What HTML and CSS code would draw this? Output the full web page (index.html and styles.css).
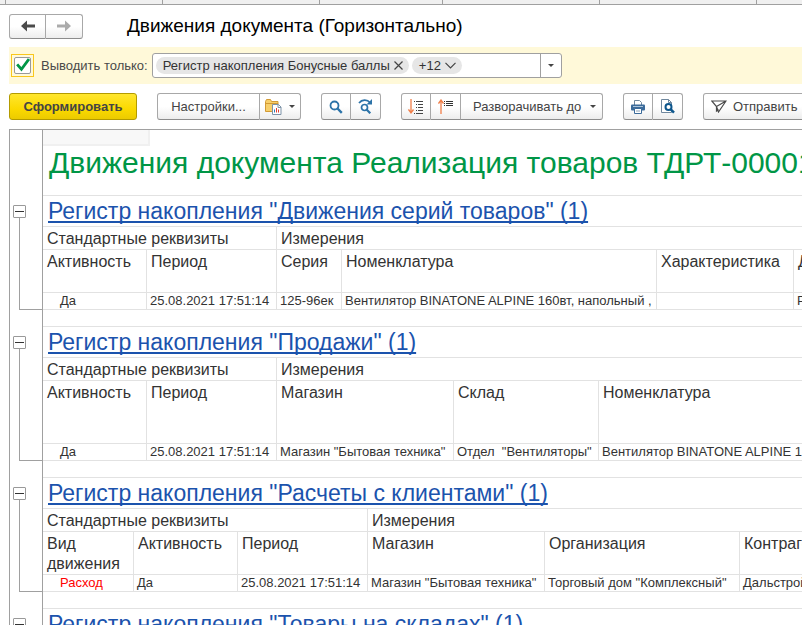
FILE: index.html
```html
<!DOCTYPE html>
<html lang="ru">
<head>
  <meta charset="UTF-8" />
  <meta name="viewport" content="width=device-width, initial-scale=1.0"/>
  <title>Движения документа (Горизонтально)</title>
  <link rel="stylesheet" href="styles.css">
</head>
<body>

<div class="tab-strip">
  <span class="tab tab-edge"></span>
  <span class="tab tab-wide"></span>
  <span class="tab tab-wide"></span>
  <span class="tab tab-narrow"></span>
  <span class="tab tab-wide"></span>
  <span class="tab tab-wide"></span>
</div>

<header class="page-header">
  <div class="btn-group">
    <button class="btn nav-btn" aria-label="Назад">
      <svg width="14" height="12" viewBox="0 0 14 12"><path d="M0 6l6-5.500V4.500h8v3H6v4z" fill="#4a4a4a"/></svg>
    </button>
    <button class="btn nav-btn" aria-label="Вперед">
      <svg width="14" height="12" viewBox="0 0 14 12"><path d="M14 6L8 .5V4.500H0v3h8v4z" fill="#ababab"/></svg>
    </button>
  </div>
  <h1>Движения документа (Горизонтально)</h1>
</header>

<div class="filter-bar">
  <span class="check-frame"><input type="checkbox" id="onlySelected" checked></span>
  <label for="onlySelected">Выводить только:</label>
  <div class="combo">
    <span class="chip">Регистр накопления Бонусные баллы
      <button class="chip-btn" aria-label="Удалить"><svg width="9" height="9" viewBox="0 0 9 9"><path d="M.5.5l8 8M8.5.5l-8 8" stroke="#444" stroke-width="1.2"/></svg></button>
    </span>
    <span class="chip">+12
      <button class="chip-btn" aria-label="Показать все"><svg width="11" height="7" viewBox="0 0 11 7"><path d="M.5.8l5 5 5-5" fill="none" stroke="#444" stroke-width="1.2"/></svg></button>
    </span>
    <input type="text" class="combo-input" aria-label="Регистры">
    <button class="combo-drop" aria-label="Выбрать"><span class="caret"></span></button>
  </div>
</div>

<div class="toolbar">
  <button class="btn btn-primary">Сформировать</button>
  <div class="btn-group">
    <button class="btn btn-settings">Настройки...</button>
    <button class="btn btn-variants" aria-label="Варианты отчета">
      <svg width="17" height="16" viewBox="0 0 17 16">
        <path d="M.5 12.500V2.500l1-2h4l1 2h6.500v10z" fill="#f7cf6b" stroke="#d29a35"/>
        <path d="M1 4.500h12" stroke="#d29a35"/>
        <path d="M7.500 5.500h6l2.500 2.500v7.500H7.500z" fill="#fff" stroke="#7d93a8"/>
        <path d="M13 5.500v3h3" fill="none" stroke="#7d93a8"/>
        <path d="M9.500 13.500v-3" stroke="#2d79b5"/><path d="M11.500 13.500V9M13.500 13.500v-3" stroke="#df3e32"/>
      </svg>
      <span class="caret"></span>
    </button>
  </div>
  <div class="btn-group">
    <button class="btn btn-icon" aria-label="Найти">
      <svg width="14" height="14" viewBox="0 0 14 14"><circle cx="5.5" cy="5.5" r="4" fill="#fff" stroke="#2c73a8" stroke-width="1.8"/><path d="M8.500 8.500l4.300 4.300" stroke="#2c73a8" stroke-width="2.4"/></svg>
    </button>
    <button class="btn btn-icon" aria-label="Найти далее">
      <svg width="16" height="15" viewBox="0 0 16 15"><path d="M1 4C4 .5 9 .2 12 3.500" fill="none" stroke="#2c73a8" stroke-width="1.8"/><path d="M14 0v5.500H8.500z" fill="#2c73a8"/><circle cx="6.5" cy="8.5" r="3" fill="#fff" stroke="#2c73a8" stroke-width="1.7"/><path d="M8.800 10.800l3.500 3.500" stroke="#2c73a8" stroke-width="2.2"/></svg>
    </button>
  </div>
  <div class="btn-group">
    <button class="btn btn-icon" aria-label="Развернуть все">
      <svg width="16" height="16" viewBox="0 0 16 16"><path d="M3 0v14M.5 10.500L3 14l2.500-3.500" fill="none" stroke="#f07f4a" stroke-width="1.3"/><path d="M6 2.500h1M8 2.500h7M8 5.500h1M10 5.500h5M8 8.500h1M10 8.500h5M8 11.500h1M10 11.500h5M6 14.500h1M8 14.500h7" stroke="#444"/></svg>
    </button>
    <button class="btn btn-icon" aria-label="Свернуть все">
      <svg width="16" height="16" viewBox="0 0 16 16"><path d="M3 15V1M.5 4.500L3 1l2.500 3.500" fill="none" stroke="#f07f4a" stroke-width="1.3"/><path d="M6 2.500h1M8 2.500h7M6 4.500h1M8 4.500h7M6 6.500h1M8 6.500h7" stroke="#333"/></svg>
    </button>
    <button class="btn btn-expand">Разворачивать до <span class="caret"></span></button>
  </div>
  <div class="btn-group">
    <button class="btn btn-icon" aria-label="Печать">
      <svg width="14" height="14" viewBox="0 0 14 14"><path d="M3.500 5V.5h5l2 2V5" fill="#fff" stroke="#6f879d"/><rect y="4.5" width="14" height="6" rx="1" fill="#3a6a9a"/><path d="M2 6.500h10" stroke="#a9c2d8"/><path d="M3.500 8.500h7v5h-7z" fill="#fff" stroke="#3a6a9a"/><path d="M5 11h4" stroke="#8ba3b8"/></svg>
    </button>
    <button class="btn btn-icon" aria-label="Предварительный просмотр">
      <svg width="14" height="15" viewBox="0 0 14 15"><path d="M.5.5h7l3 3v10H.5z" fill="#fff" stroke="#6f879d"/><path d="M7.500.5v3h3" fill="none" stroke="#6f879d"/><circle cx="7.5" cy="8" r="3" fill="#fff" stroke="#0d568c" stroke-width="2"/><path d="M9.500 10.200l3.500 3.500" stroke="#0d568c" stroke-width="2.5"/></svg>
    </button>
  </div>
  <button class="btn btn-send">
    <svg width="16" height="13" viewBox="0 0 16 13"><path d="M.8 1H15L7.500 12l-2-5.500zM5.500 6.500L15 1M5.500 6.500V11l2-1.500" fill="none" stroke="#4a4a4a" stroke-width="1.2"/></svg>
    Отправить <span class="caret"></span>
  </button>
</div>

<main class="report">
  <div class="row-group title-group">
    <div class="gutter"></div>
    <div class="sheet title-row">
      <div class="active-cell"></div>
      <h2>Движения документа Реализация товаров ТДРТ-00001</h2>
    </div>
  </div>

  <section class="row-group">
    <div class="gutter">
      <button class="toggle" aria-label="Свернуть"></button>
      <div class="branch"></div>
    </div>
    <div class="sheet">
      <h3><a href="#">Регистр накопления "Движения серий товаров" (1)</a></h3>
      <table>
        <colgroup><col class="w-104"><col class="w-130"><col class="w-65"><col class="w-315"><col class="w-137"><col></colgroup>
        <tr class="groups"><th colspan="2">Стандартные реквизиты</th><th colspan="4">Измерения</th></tr>
        <tr class="fields"><th>Активность</th><th>Период</th><th>Серия</th><th>Номенклатура</th><th>Характеристика</th><th>Документ</th></tr>
        <tr class="values"><td class="first">Да</td><td>25.08.2021 17:51:14</td><td>125-96ек</td><td>Вентилятор BINATONE ALPINE 160вт, напольный ,</td><td></td><td>Реализация</td></tr>
      </table>
    </div>
  </section>

  <section class="row-group">
    <div class="gutter">
      <button class="toggle" aria-label="Свернуть"></button>
      <div class="branch"></div>
    </div>
    <div class="sheet">
      <h3><a href="#">Регистр накопления "Продажи" (1)</a></h3>
      <table>
        <colgroup><col class="w-104"><col class="w-130"><col class="w-177"><col class="w-145"><col></colgroup>
        <tr class="groups"><th colspan="2">Стандартные реквизиты</th><th colspan="3">Измерения</th></tr>
        <tr class="fields fields-tall"><th>Активность</th><th>Период</th><th>Магазин</th><th>Склад</th><th>Номенклатура</th></tr>
        <tr class="values"><td class="first">Да</td><td>25.08.2021 17:51:14</td><td>Магазин "Бытовая техника"</td><td>Отдел  "Вентиляторы"</td><td>Вентилятор BINATONE ALPINE 160вт, напольный ,</td></tr>
      </table>
    </div>
  </section>

  <section class="row-group">
    <div class="gutter">
      <button class="toggle" aria-label="Свернуть"></button>
      <div class="branch"></div>
    </div>
    <div class="sheet">
      <h3><a href="#">Регистр накопления "Расчеты с клиентами" (1)</a></h3>
      <table>
        <colgroup><col class="w-91"><col class="w-104"><col class="w-130"><col class="w-177"><col class="w-195"><col></colgroup>
        <tr class="groups"><th colspan="3">Стандартные реквизиты</th><th colspan="3">Измерения</th></tr>
        <tr class="fields"><th>Вид движения</th><th>Активность</th><th>Период</th><th>Магазин</th><th>Организация</th><th>Контрагент</th></tr>
        <tr class="values"><td class="first expense">Расход</td><td>Да</td><td>25.08.2021 17:51:14</td><td>Магазин "Бытовая техника"</td><td>Торговый дом "Комплексный"</td><td>Дальстрой</td></tr>
      </table>
    </div>
  </section>

  <section class="row-group">
    <div class="gutter">
      <button class="toggle" aria-label="Свернуть"></button>
      <div class="branch"></div>
    </div>
    <div class="sheet">
      <h3><a href="#">Регистр накопления "Товары на складах" (1)</a></h3>
    </div>
  </section>
</main>

</body>
</html>
```
FILE: styles.css
```css
* {
  box-sizing: border-box;
}
body {
  margin: 0;
  height: 100vh;
  display: flex;
  flex-direction: column;
  overflow: hidden;
  font-family: "Liberation Sans", Arial, sans-serif;
  font-size: 13px;
  color: #333;
  background: #fff;
}
button, input {
  font: inherit;
  color: inherit;
}
svg {
  flex: none;
  display: block;
}

/* tabs of the open windows */
.tab-strip {
  display: flex;
  flex: none;
  height: 5px;
  background: #f0f0f0;
  border-bottom: 1px solid #a0a0a0;
}
.tab {
  flex: none;
  border-right: 1px solid #a0a0a0;
}
.tab-edge {
  width: 6px;
}
.tab-wide {
  width: 157px;
}
.tab-narrow {
  width: 123px;
}

.page-header {
  display: flex;
  flex: none;
  align-items: center;
  gap: 44px;
  height: 42px;
  padding-left: 9px;
}
h1 {
  margin: 0;
  font-size: 19px;
  font-weight: normal;
  color: #000;
  white-space: nowrap;
}

/* buttons */
.btn {
  display: flex;
  flex: none;
  align-items: center;
  justify-content: center;
  height: 27px;
  padding: 0 7px;
  border: 1px solid #a8a8a8;
  border-bottom-color: #8c8c8c;
  border-radius: 3px;
  background: linear-gradient(#fff 50%, #ededed);
  color: #444;
  white-space: nowrap;
}
.btn-group {
  display: flex;
  flex: none;
}
.btn-group .btn:not(:first-child) {
  border-left: none;
  border-top-left-radius: 0;
  border-bottom-left-radius: 0;
}
.btn-group .btn:not(:last-child) {
  border-top-right-radius: 0;
  border-bottom-right-radius: 0;
}
.nav-btn {
  width: 37px;
  height: 25px;
}
.caret {
  flex: none;
  border: 3px solid transparent;
  border-top-color: #444;
  border-bottom: none;
}

/* filter */
.filter-bar {
  display: flex;
  flex: none;
  align-items: center;
  height: 37px;
  margin-left: 9px;
  padding-left: 2px;
  background: #fff9d9;
}
.filter-bar label {
  margin: 0 4px 0 7px;
  color: #4a4a4a;
  white-space: nowrap;
}
.check-frame {
  display: flex;
  align-items: center;
  justify-content: center;
  width: 23px;
  height: 23px;
  border: 1px solid #f9c71c;
}
.check-frame input {
  appearance: none;
  width: 17px;
  height: 17px;
  margin: 0;
  border: 1px solid #999;
  border-radius: 2px;
  background: #fff;
}
.check-frame input:checked {
  background: #fff url("data:image/svg+xml,%3Csvg xmlns='http://www.w3.org/2000/svg' viewBox='0 0 14 14'%3E%3Cpath d='M2 6l4 4.500L13 1' fill='none' stroke='%23009646' stroke-width='2.600'/%3E%3C/svg%3E");
}
.combo {
  display: flex;
  align-items: center;
  gap: 3px;
  width: 410px;
  height: 25px;
  padding-left: 3px;
  border: 1px solid #a0a0a0;
  border-radius: 3px;
  background: #fff;
}
.chip {
  display: flex;
  flex: none;
  align-items: center;
  gap: 4px;
  height: 17px;
  padding: 0 6px 0 7px;
  border-radius: 9px;
  background: #e6e6e6;
  white-space: nowrap;
}
.chip-btn {
  padding: 0;
  border: none;
  background: none;
}
.combo-input {
  flex: 1;
  min-width: 0;
  border: none;
  outline: none;
  background: none;
}
.combo-drop {
  display: flex;
  align-items: center;
  justify-content: center;
  align-self: stretch;
  width: 21px;
  padding: 0;
  border: none;
  border-left: 1px solid #a0a0a0;
  background: none;
}

/* toolbar */
.toolbar {
  display: flex;
  flex: none;
  gap: 20px;
  padding: 9px 0 9px 9px;
}
.btn-primary {
  width: 128px;
  border-color: #b39b00;
  background: linear-gradient(#ffe62e, #fbd900 60%, #eccb00);
  font-weight: bold;
}
.btn-settings {
  width: 103px;
}
.btn-variants {
  width: 41px;
  gap: 7px;
  padding: 0;
}
.btn-icon {
  width: 30px;
  padding: 0;
}
.btn-expand {
  width: 142px;
  justify-content: space-between;
  padding: 0 6px 0 12px;
}
.btn-send {
  gap: 6px;
}

/* report */
.report {
  flex: 1;
  min-height: 0;
  margin-left: 9px;
  overflow: hidden;
  border-top: 1px solid #a0a0a0;
  border-left: 1px solid #a0a0a0;
}
.row-group {
  display: grid;
  grid-template-columns: 33px 1fr;
}
.gutter {
  display: flex;
  flex-direction: column;
  padding: 9px 0 17px 3px;
  border-right: 1px solid #a0a0a0;
}
.toggle {
  flex: none;
  width: 13px;
  height: 13px;
  padding: 0 1px;
  border: 1px solid #999;
  border-radius: 1px;
  background: #fff;
}
.toggle::before {
  content: "";
  display: block;
  height: 1px;
  background: #333;
}
.branch {
  flex: 1;
  margin-left: 6px;
  border-left: 1px solid #a0a0a0;
  border-bottom: 1px solid #a0a0a0;
}
.sheet {
  min-width: 0;
  overflow: hidden;
  padding-bottom: 16px;
  border-bottom: 1px solid #e2e2e2;
}
.title-row {
  height: 66px;
  padding: 0;
}
.active-cell {
  width: 107px;
  height: 16px;
  border: solid #f0f0f0;
  border-width: 0 2px 2px 0;
  background: #f8f8f8;
}
h2 {
  margin: 0 0 0 6px;
  font-size: 30px;
  line-height: 34px;
  font-weight: normal;
  color: #009646;
  white-space: nowrap;
}
h3 {
  height: 31px;
  margin: 0;
  padding-left: 5px;
  border-bottom: 1px solid #e2e2e2;
  font-size: 23px;
  line-height: 30px;
  font-weight: normal;
  white-space: nowrap;
}
h3 a {
  color: #1b53ad;
  text-decoration-thickness: 2px;
  text-underline-offset: 2px;
  text-decoration-skip-ink: none;
}
table {
  width: 960px;
  table-layout: fixed;
  border-spacing: 0;
}
th, td {
  padding: 0 3px;
  border-right: 1px solid #e2e2e2;
  border-bottom: 1px solid #e2e2e2;
  text-align: left;
  font-weight: normal;
  white-space: pre;
  overflow: hidden;
}
th {
  padding: 2px 4px 0;
  font-size: 16px;
  line-height: 20px;
  vertical-align: top;
  white-space: normal;
}
.groups {
  height: 23px;
}
.fields {
  height: 43px;
}
.fields-tall {
  height: 63px;
}
.values td {
  height: 17px;
  font-size: 13px;
  line-height: 16px;
}
.values .first {
  padding-left: 17px;
}
.values .expense {
  color: #f00;
}
.w-65 { width: 65px; }
.w-91 { width: 91px; }
.w-104 { width: 104px; }
.w-130 { width: 130px; }
.w-137 { width: 137px; }
.w-145 { width: 145px; }
.w-177 { width: 177px; }
.w-195 { width: 195px; }
.w-315 { width: 315px; }
```
